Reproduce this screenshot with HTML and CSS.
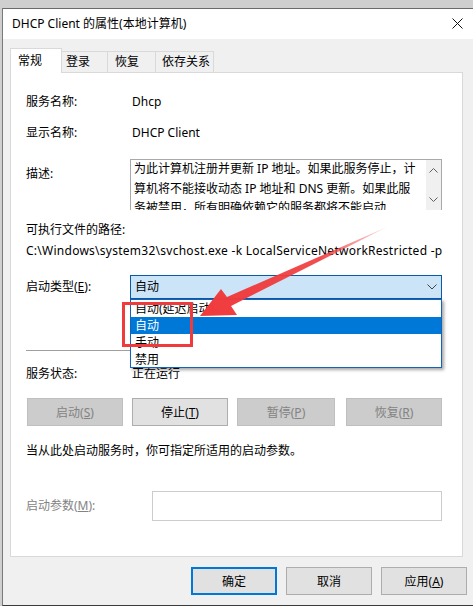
FILE: index.html
```html
<!DOCTYPE html>
<html lang="zh-CN">
<head>
    <meta charset="UTF-8">
    <title>DHCP Client 的属性(本地计算机)</title>
    <link rel="stylesheet" href="styles.css">
</head>
<body>

    <div class="window">
        <div class="titlebar">
            <span class="title">DHCP Client 的属性(本地计算机)</span>
            <svg class="close" width="11" height="11" viewBox="0 0 11 11">
                <path d="M0.5 0.5 L10.5 10.5 M10.5 0.5 L0.5 10.5" stroke="#111" stroke-width="1"/>
            </svg>
        </div>

        <!-- Tabs -->
        <div class="tabs">
            <div class="tab tab-general active">常规</div>
            <div class="tab tab-logon">登录</div>
            <div class="tab tab-recovery">恢复</div>
            <div class="tab tab-deps">依存关系</div>
        </div>

        <!-- General page -->
        <div class="panel">
            <div class="row row-name">
                <span class="label">服务名称:</span>
                <span class="value">Dhcp</span>
            </div>
            <div class="row row-display">
                <span class="label">显示名称:</span>
                <span class="value">DHCP Client</span>
            </div>
            <div class="row row-desc">
                <span class="label desc-label">描述:</span>
                <div class="desc-box">
                    <div class="desc-text">
                        <div>为此计算机注册并更新 IP 地址。如果此服务停止，计</div>
                        <div>算机将不能接收动态 IP 地址和 DNS 更新。如果此服</div>
                        <div>务被禁用，所有明确依赖它的服务都将不能启动</div>
                    </div>
                    <div class="scrollbar">
                        <svg width="9" height="5" viewBox="0 0 9 5"><polyline points="0.5,4.5 4.5,0.5 8.5,4.5" fill="none" stroke="#606060"/></svg>
                        <svg width="9" height="5" viewBox="0 0 9 5"><polyline points="0.5,0.5 4.5,4.5 8.5,0.5" fill="none" stroke="#606060"/></svg>
                    </div>
                </div>
            </div>
            <div class="row row-pathlabel">
                <span>可执行文件的路径:</span>
            </div>
            <div class="row row-path">
                <span class="path">C:\Windows\system32\svchost.exe -k LocalServiceNetworkRestricted -p</span>
            </div>
            <div class="row row-startup">
                <span class="label">启动类型(<u>E</u>):</span>
                <div class="combo">
                    <span>自动</span>
                    <svg width="10" height="6" viewBox="0 0 10 6"><polyline points="0.5,0.5 5,5 9.5,0.5" fill="none" stroke="#444"/></svg>
                </div>
            </div>
            <div class="separator"></div>
            <div class="row row-status">
                <span class="label">服务状态:</span>
                <span class="value">正在运行</span>
            </div>
            <div class="buttons">
                <button class="btn disabled">启动(<u>S</u>)</button>
                <button class="btn">停止(<u>T</u>)</button>
                <button class="btn disabled wide">暂停(<u>P</u>)</button>
                <button class="btn disabled last">恢复(<u>R</u>)</button>
            </div>
            <div class="row row-note">
                <span>当从此处启动服务时，你可指定所适用的启动参数。</span>
            </div>
            <div class="row row-params">
                <span class="label param-label">启动参数(<u>M</u>):</span>
                <div class="param-input"></div>
            </div>
        </div>

        <div class="footer">
            <button class="btn btn-dialog default">确定</button>
            <button class="btn btn-dialog">取消</button>
            <button class="btn btn-dialog">应用(<u>A</u>)</button>
        </div>
    </div>

    <!-- Open drop-down list of the combo box -->
    <div class="dropdown">
        <div class="option">自动(延迟启动)</div>
        <div class="option selected">自动</div>
        <div class="option">手动</div>
        <div class="option">禁用</div>
    </div>

    <!-- Red annotation -->
    <div class="mark-box"></div>
    <svg class="mark-arrow" width="473" height="606" viewBox="0 0 473 606">
        <defs>
            <linearGradient id="fade" x1="387" y1="227" x2="200" y2="316" gradientUnits="userSpaceOnUse">
                <stop offset="0" stop-color="#f03a3c" stop-opacity="0.15"/>
                <stop offset="0.35" stop-color="#f03a3c" stop-opacity="0.9"/>
                <stop offset="1" stop-color="#f03a3c"/>
            </linearGradient>
        </defs>
        <polygon points="200,316 221,289 227,297 387,227 231,306 237,315" fill="url(#fade)"/>
    </svg>

</body>
</html>
```

FILE: styles.css
```css
body {
    margin: 0;
    padding: 0;
    width: 473px;
    height: 606px;
    overflow: hidden;
    background-color: #cfcfcf;
    font-family: "Noto Sans", "Noto Sans CJK SC", sans-serif;
    font-size: 12px;
    color: #000;
}

u {
    text-decoration: underline;
    text-underline-offset: 1px;
}

.window {
    box-sizing: border-box;
    margin: 8px 0 0 2px;
    width: 471px;
    height: 598px;
    background-color: #f0f0f0;
    border-top: 1px solid #6b6b6b;
    border-left: 1px solid #7a7a7a;
    border-bottom: 1px solid #3c3c3c;
}

/* Title bar */
.titlebar {
    height: 30px;
    background-color: #fff;
    display: flex;
    align-items: center;
    justify-content: space-between;
    padding: 0 10px 0 9px;
}

.title {
    font-size: 12px;
    line-height: 20px;
}

.close {
    display: block;
    margin-top: -2px;
}

/* Tabs */
.tabs {
    display: flex;
    align-items: flex-end;
    height: 24px;
    margin: 9px 0 0 7px;
}

.tab {
    box-sizing: border-box;
    height: 21px;
    line-height: 20px;
    border: 1px solid #d9d9d9;
    border-bottom: none;
    background-color: #f0f0f0;
    margin-left: -1px;
}

.tab.active {
    position: relative;
    z-index: 1;
    height: 25px;
    margin-bottom: -1px;
    margin-left: 0;
    background-color: #fff;
    line-height: 24px;
}

.tab-general { width: 52px; padding-left: 7px; }
.tab-logon { width: 47px; padding-left: 4px; }
.tab-recovery { width: 49px; padding-left: 7px; }
.tab-deps { width: 59px; padding-left: 6px; }

/* Page */
.panel {
    box-sizing: border-box;
    margin-left: 7px;
    width: 453px;
    height: 485px;
    background-color: #fff;
    border: 1px solid #d9d9d9;
    padding: 19px 0 0 15px;
    display: flex;
    flex-direction: column;
}

.row {
    display: flex;
    align-items: center;
    line-height: 20px;
    height: 20px;
}

.label {
    width: 106px;
    flex-shrink: 0;
}

.row-display { margin-top: 11px; }

.row-desc {
    margin-top: 16px;
    height: 51px;
    align-items: flex-start;
}

.desc-label {
    width: 104px;
    padding-top: 5px;
}

.desc-box {
    box-sizing: border-box;
    width: 312px;
    height: 51px;
    border: 1px solid #a9a9a9;
    border-bottom: none;
    display: flex;
    overflow: hidden;
}

.desc-text {
    flex: 1;
    padding: 0 0 0 3px;
    line-height: 19.5px;
    white-space: nowrap;
    margin-top: -1px;
}

.scrollbar {
    width: 15px;
    background-color: #f0f0f0;
    display: flex;
    flex-direction: column;
    align-items: center;
    gap: 24px;
    padding-top: 8px;
}

.scrollbar svg {
    display: block;
}

.row-pathlabel { margin-top: 10px; }
.row-path { margin-top: 1px; }

.path {
    white-space: nowrap;
    width: 418px;
    overflow: hidden;
    letter-spacing: 0.26px;
}

.row-startup {
    margin-top: 14px;
    height: 24px;
}

.combo {
    box-sizing: border-box;
    margin-left: -2px;
    width: 312px;
    height: 24px;
    background-color: #cce4f7;
    border: 1px solid #0b5aa8;
    display: flex;
    align-items: center;
    justify-content: space-between;
    padding: 0 4px 0 4px;
}

.separator {
    margin-top: 51px;
    width: 416px;
    height: 1px;
    background-color: #a0a0a0;
}

.row-status { margin-top: 13px; }

/* Service control buttons */
.buttons {
    display: flex;
    gap: 9px;
    margin: 14px 0 0 1px;
}

.btn {
    box-sizing: border-box;
    width: 96px;
    height: 28px;
    padding: 0;
    font-family: inherit;
    font-size: 12px;
    color: #000;
    background-color: #e1e1e1;
    border: 1px solid #adadad;
    border-radius: 0;
}

.btn.disabled {
    background-color: #cccccc;
    border-color: #bfbfbf;
    color: #838383;
}

.btn.wide { width: 98px; }
.btn.last { margin-left: 2px; }

.row-note { margin-top: 15px; }

.row-params {
    margin-top: 30px;
    height: 30px;
}

.param-label {
    width: 126px;
    color: #838383;
}

.param-input {
    box-sizing: border-box;
    width: 290px;
    height: 30px;
    border: 1px solid #cccccc;
    background-color: #fff;
}

/* Dialog buttons */
.footer {
    display: flex;
    justify-content: flex-end;
    gap: 9px;
    margin-top: 10px;
    padding-right: 6px;
}

.btn-dialog {
    width: 86px;
}

.btn-dialog.default {
    border: 2px solid #0078d7;
}

/* Drop-down list */
.dropdown {
    position: absolute;
    left: 130px;
    top: 299px;
    box-sizing: border-box;
    width: 312px;
    height: 69px;
    background-color: #fff;
    border: 1px solid #1463b8;
    box-shadow: 2px 2px 3px rgba(0, 0, 0, 0.35);
}

.option {
    height: 17px;
    line-height: 17px;
    padding-left: 4px;
}

.option.selected {
    background-color: #0078d7;
    color: #fff;
}

/* Annotation */
.mark-box {
    position: absolute;
    left: 122px;
    top: 302px;
    box-sizing: border-box;
    width: 71px;
    height: 45px;
    border: 3px solid #f03a3c;
}

.mark-arrow {
    position: absolute;
    left: 0;
    top: 0;
    pointer-events: none;
}
```
